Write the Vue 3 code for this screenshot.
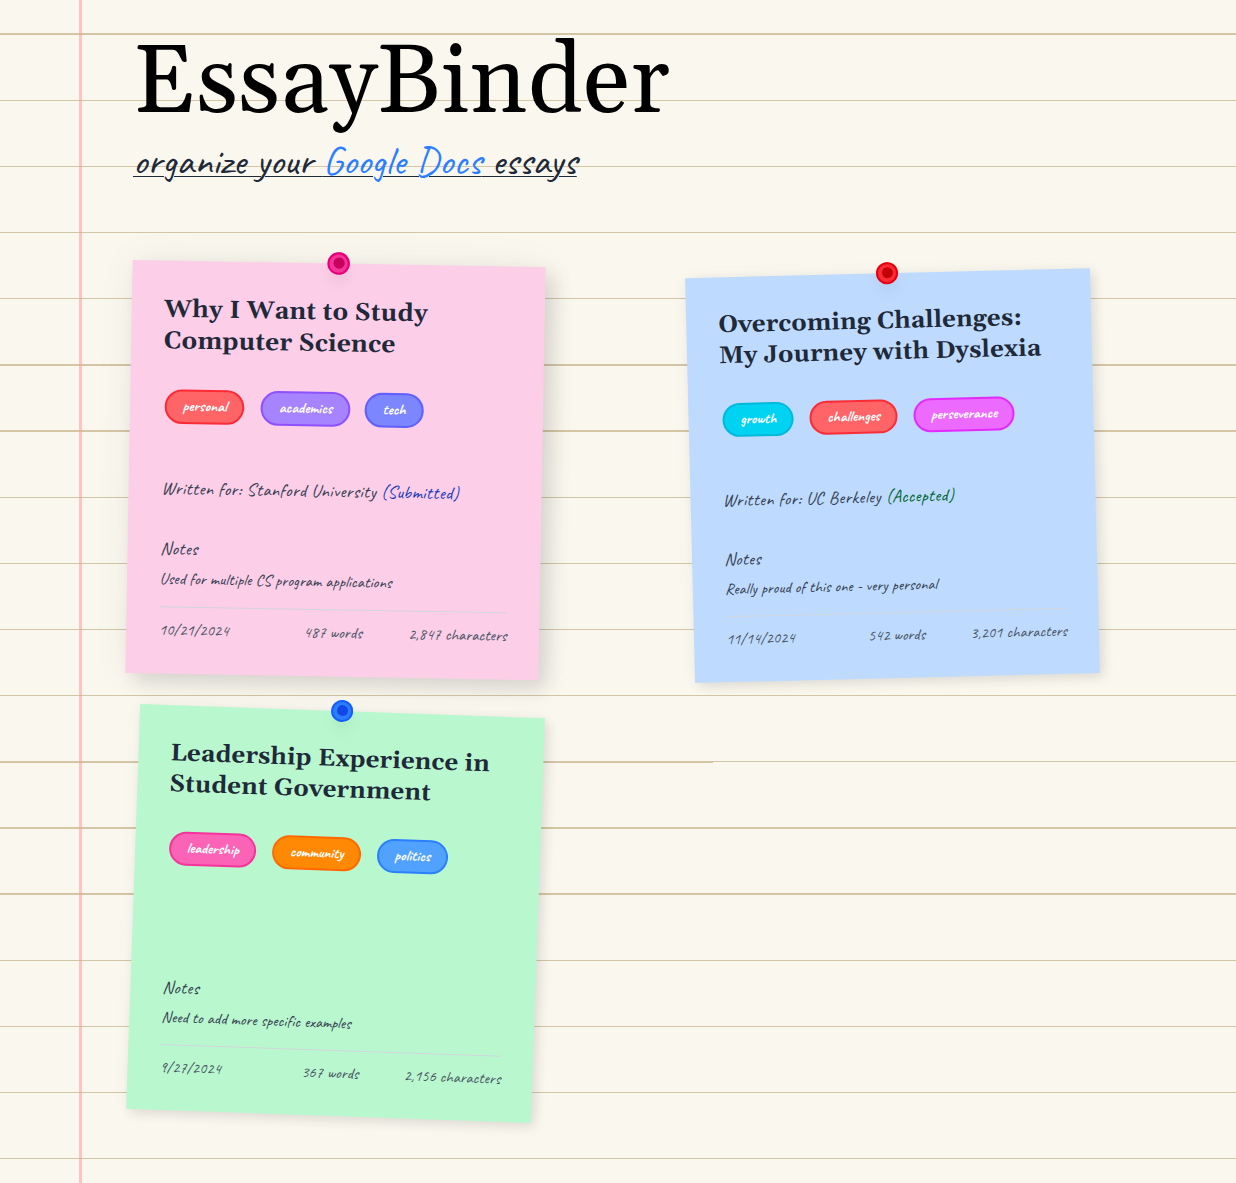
<script setup>
const rules = [
  { y: 33, thick: 2 }, { y: 100, thick: 1 }, { y: 166, thick: 1 }, { y: 232, thick: 1 },
  { y: 298, thick: 1 }, { y: 364, thick: 2 }, { y: 430, thick: 2 }, { y: 497, thick: 1 },
  { y: 563, thick: 1 }, { y: 629, thick: 1 }, { y: 695, thick: 1 }, { y: 761, thick: 1 },
  { y: 827, thick: 2 }, { y: 893, thick: 2 }, { y: 960, thick: 1 }, { y: 1026, thick: 1 },
  { y: 1092, thick: 1 }, { y: 1158, thick: 1 },
]

const essays = [
  {
    id: 'cs', color: 'pink', pin: 'pin-pink', title: 'Why I Want to Study Computer Science',
    tags: [['personal', 'red'], ['academics', 'violet'], ['tech', 'indigo']],
    school: 'Stanford University', status: 'Submitted',
    notes: 'Used for multiple CS program applications',
    date: '10/21/2024', words: '487', chars: '2,847',
  },
  {
    id: 'dyslexia', color: 'blue', pin: 'pin-red', title: 'Overcoming Challenges: My Journey with Dyslexia',
    tags: [['growth', 'cyan'], ['challenges', 'red'], ['perseverance', 'fuchsia']],
    school: 'UC Berkeley', status: 'Accepted',
    notes: 'Really proud of this one - very personal',
    date: '11/14/2024', words: '542', chars: '3,201',
  },
  {
    id: 'leadership', color: 'green', pin: 'pin-blue', title: 'Leadership Experience in Student Government',
    tags: [['leadership', 'rose'], ['community', 'orange'], ['politics', 'sky']],
    school: '', status: '',
    notes: 'Need to add more specific examples',
    date: '9/27/2024', words: '367', chars: '2,156',
  },
]
</script>

<template>
  <div class="page">
    <svg class="paper" width="1236" height="1183" viewBox="0 0 1236 1183" shape-rendering="crispEdges">
      <rect v-for="r in rules" :key="r.y" x="0" :y="r.y" width="1236" :height="r.thick" fill="#d4c5a5" />
      <rect x="0" y="762" width="713" height="1" fill="#d4c5a5" />
      <rect x="79" y="0" width="3" height="1183" fill="#ff9a9a" fill-opacity="0.55" />
    </svg>
    <header>
      <h1>EssayBinder</h1>
      <p class="tagline">organize your <span>Google Docs</span> essays</p>
    </header>
    <main class="board">
      <article v-for="e in essays" :key="e.id" class="card" :class="e.color">
        <i class="pin" :class="e.pin"></i>
        <h2>{{ e.title }}</h2>
        <div class="tags">
          <span v-for="t in e.tags" :key="t[0]" class="tag" :class="t[1]">{{ t[0] }}</span>
        </div>
        <div class="written">
          <template v-if="e.school">Written for: {{ e.school }} <span :class="e.status.toLowerCase()">({{ e.status }})</span></template>
        </div>
        <div class="label">Notes</div>
        <div class="notes">{{ e.notes }}</div>
        <footer><span>{{ e.date }}</span><span>{{ e.words }} words</span><span>{{ e.chars }} characters</span></footer>
      </article>
    </main>
  </div>
</template>

<style>
body { background: #faf7ef; }
</style>

<style scoped>
.page {
  position: relative;
  box-sizing: border-box;
  width: 1236px;
  height: 1183px;
  padding: 29px 0 0 133px;
  overflow: hidden;
  background: #faf7ef;
  font-family: Caveat, cursive;
}
.paper { position: absolute; left: 0; top: 0; }
header { position: relative; height: 238.5px; }
h1 {
  margin: 0;
  font: 400 96px/110px Gelasio, Georgia, "Liberation Serif", serif;
  letter-spacing: 0.7px;
  color: #000;
}
.tagline {
  display: inline-block;
  margin: -2px 0 0;
  font-size: 40px;
  line-height: 48px;
  letter-spacing: 0.18px;
  color: #1e2939;
  text-decoration: underline;
  text-decoration-thickness: 1px;
  text-underline-offset: 2px;
}
.tagline span { color: #2b7fff; }
.board {
  position: relative;
  display: grid;
  grid-template-columns: 405px 405px;
  grid-auto-rows: 405px;
  column-gap: 152px;
  row-gap: 38.5px;
}
.card {
  position: relative;
  box-sizing: border-box;
  display: flex;
  flex-direction: column;
  padding: 33px 32px 32px;
  box-shadow: 4px 4px 12px rgba(0, 0, 0, 0.1), 0 0 20px rgba(0, 0, 0, 0.03);
}
.pink {
  background: #fccee8;
  transform: translateY(-0.4px) rotate(1deg) scale(1.02);
  box-shadow: 8px 8px 20px rgba(0, 0, 0, 0.13), 0 0 40px rgba(0, 0, 0, 0.05);
}
.blue { background: #bedbff; transform: translateY(5.1px) rotate(-1.42deg); }
.green { background: #b9f8cf; transform: rotate(2deg); }
.pin {
  position: absolute;
  left: 50%;
  top: -11px;
  width: 11px;
  height: 11px;
  margin-left: -11px;
  border-radius: 50%;
  border: 5.5px solid;
  box-shadow: 0 10px 15px -3px rgba(0, 0, 0, 0.1);
}
.pin::after {
  content: "";
  position: absolute;
  inset: -5.5px;
  border: 2px solid;
  border-radius: 50%;
}
.pin-pink { background: #c6005c; border-color: #f6339a; }
.pin-pink::after { border-color: #e60076; }
.pin-red { background: #c10007; border-color: #fb2c36; }
.pin-red::after { border-color: #e7000b; }
.pin-blue { background: #1447e6; border-color: #2b7fff; }
.pin-blue::after { border-color: #155dfc; }
h2 {
  margin: 0;
  font: 700 24px/31px Gelasio, Georgia, "Liberation Serif", serif;
  letter-spacing: 0.18px;
  color: #1e2939;
  height: 93px;
}
.tags { display: flex; gap: 16px; height: 83px; margin-left: 2px; align-items: flex-start; }
.tag {
  box-sizing: border-box;
  height: 34px;
  padding: 0 15.5px;
  border: 2px solid;
  border-radius: 17px;
  font-size: 15px;
  letter-spacing: 0.04px;
  font-weight: 700;
  line-height: 30px;
  color: #fff;
}
.red { background: #ff6467; border-color: #fb2c36; }
.violet { background: #a684ff; border-color: #8e51ff; }
.indigo { background: #7c86ff; border-color: #615fff; margin-left: -1.7px; }
.cyan { background: #00d3f2; border-color: #00b8db; }
.fuchsia { background: #ed6aff; border-color: #e12afb; }
.rose { background: #fb64b6; border-color: #f6339a; }
.orange { background: #ff8904; border-color: #ff6900; }
.sky { background: #51a2ff; border-color: #2b7fff; }
.written { height: 58.5px; font-size: 18px; letter-spacing: 0.34px; line-height: 28px; color: #364153; }
.submitted { color: #193cb8; }
.accepted { color: #016630; }
.label { height: 30.5px; font-size: 18px; letter-spacing: 0.34px; line-height: 28px; color: #364153; }
.notes { height: 40.5px; font-size: 16px; letter-spacing: 0.07px; line-height: 28px; color: #364153; }
footer {
  display: grid;
  grid-template-columns: repeat(3, 1fr);
  border-top: 1px solid #d1d5dc;
  padding-top: 12px;
  font-size: 16px;
  letter-spacing: 0.04px;
  line-height: 20px;
  color: #4a5565;
}
footer span:nth-child(2) { text-align: center; }
footer span:nth-child(3) { text-align: right; }
</style>
